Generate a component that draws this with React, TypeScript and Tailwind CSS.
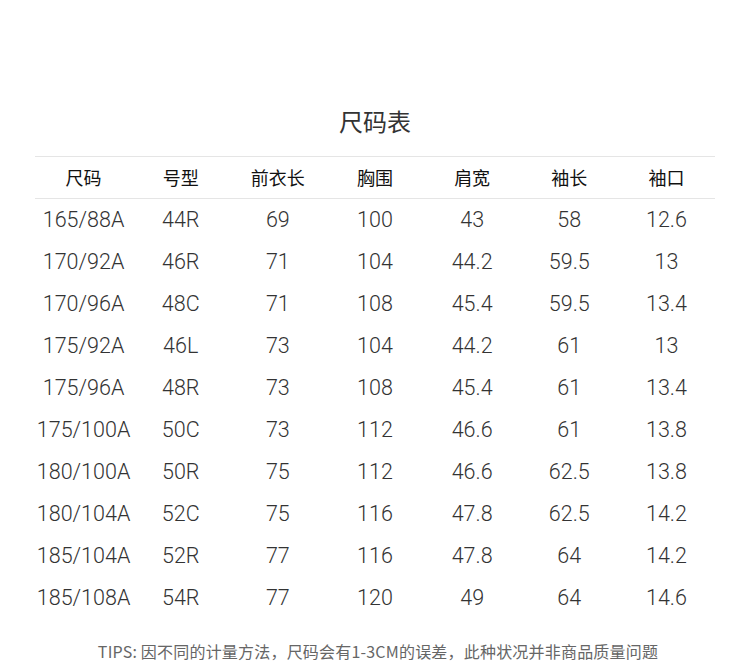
const headers = ["尺码", "号型", "前衣长", "胸围", "肩宽", "袖长", "袖口"];

const rows = [
  ["165/88A", "44R", "69", "100", "43", "58", "12.6"],
  ["170/92A", "46R", "71", "104", "44.2", "59.5", "13"],
  ["170/96A", "48C", "71", "108", "45.4", "59.5", "13.4"],
  ["175/92A", "46L", "73", "104", "44.2", "61", "13"],
  ["175/96A", "48R", "73", "108", "45.4", "61", "13.4"],
  ["175/100A", "50C", "73", "112", "46.6", "61", "13.8"],
  ["180/100A", "50R", "75", "112", "46.6", "62.5", "13.8"],
  ["180/104A", "52C", "75", "116", "47.8", "62.5", "14.2"],
  ["185/104A", "52R", "77", "116", "47.8", "64", "14.2"],
  ["185/108A", "54R", "77", "120", "49", "64", "14.6"],
];

export default function App() {
  return (
    <div className="w-[750px] h-[662px] bg-white overflow-hidden font-['Noto_Sans_CJK_SC',sans-serif]">
      {/* Title */}
      <h1 className="pt-[105px] mb-[19px] text-center text-[24px] leading-[32px] text-[#333] font-normal">
        尺码表
      </h1>

      {/* Table */}
      <div className="w-[680px] mx-auto">
        <div className="grid grid-cols-7 h-[43px] border-y border-[#e5e5e5] items-center pb-[2px]">
          {headers.map((h) => (
            <div key={h} className="text-center text-[18px] leading-none text-[#111]">
              {h}
            </div>
          ))}
        </div>
        {rows.map((r, i) => (
          <div key={i} className="grid grid-cols-7 h-[42px] items-center">
            {r.map((c, j) => (
              <div
                key={j}
                className="text-center text-[21.5px] leading-none text-[#333] font-light font-['Roboto',sans-serif]"
              >
                {c}
              </div>
            ))}
          </div>
        ))}
      </div>

      {/* Tips */}
      <p className="mt-[23px] text-center text-[16px] leading-[19px] tracking-[0.2px] text-[#666] pl-[6px]">
        TIPS: 因不同的计量方法，尺码会有1-3CM的误差，此种状况并非商品质量问题
      </p>
    </div>
  );
}
